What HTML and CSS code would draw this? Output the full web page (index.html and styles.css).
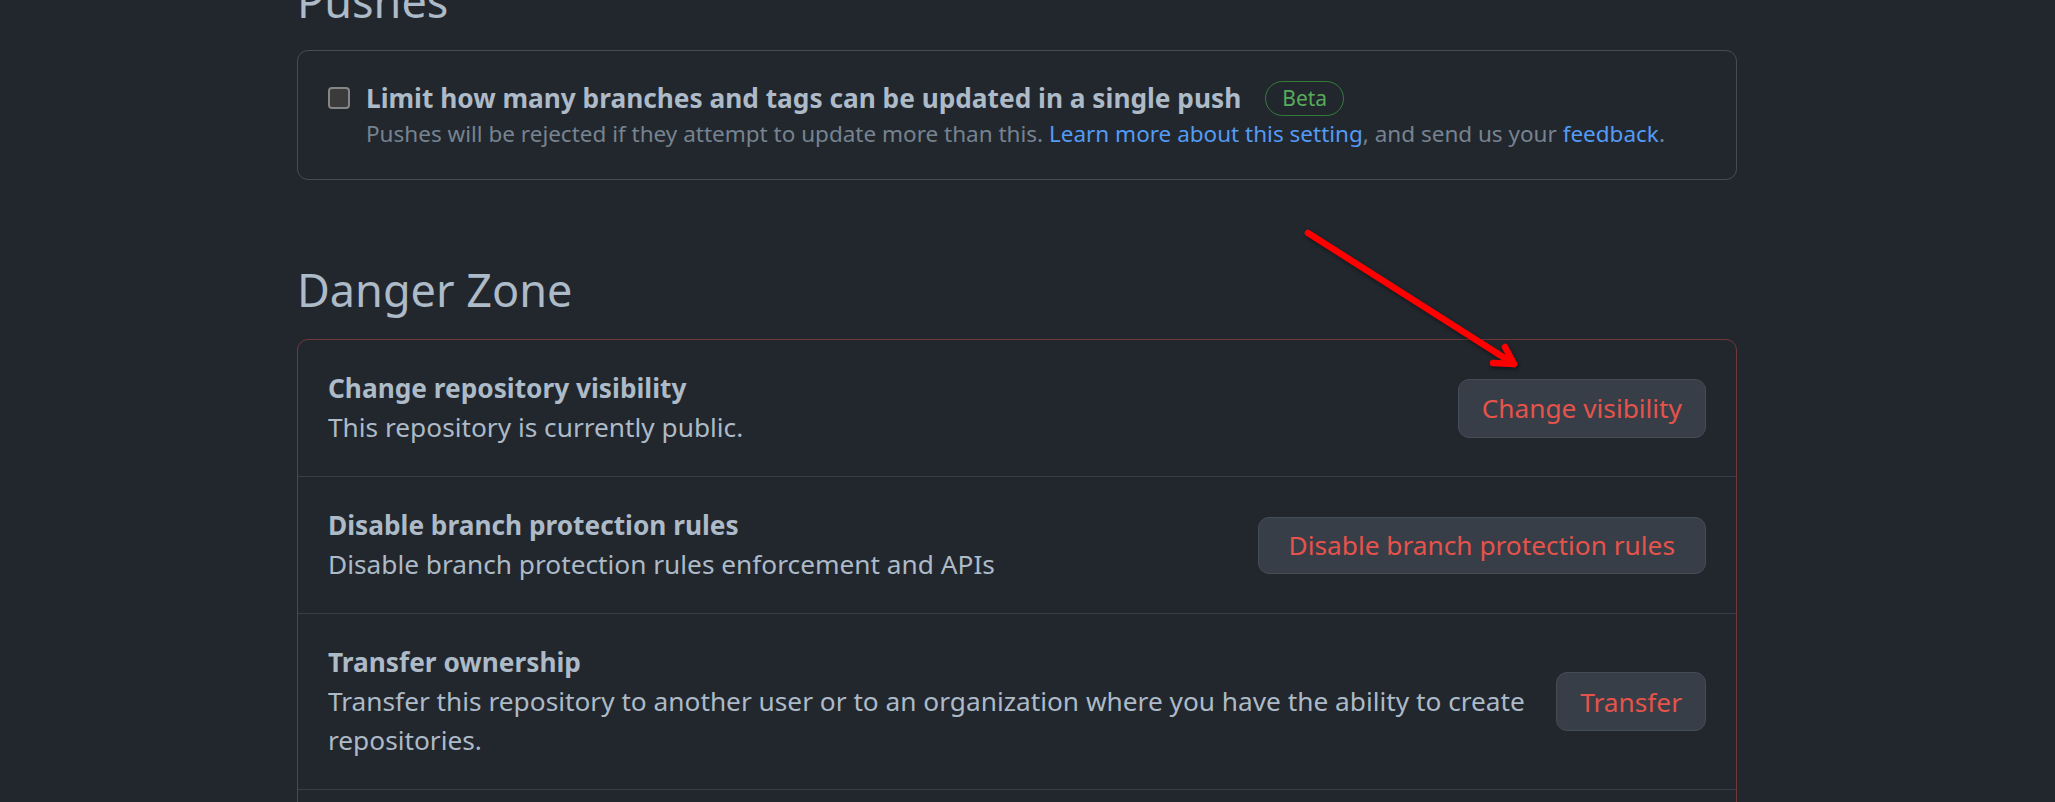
FILE: index.html
```html
<!DOCTYPE html>
<html lang="en">
<head>
<meta charset="utf-8">
<title>Settings</title>
<link rel="stylesheet" href="styles.css">
</head>
<body>
<main class="page">
  <h2 class="subhead subhead-first">Pushes</h2>
  <div class="box">
    <div class="push-row">
      <span class="checkbox"></span>
      <div class="push-body">
        <div class="push-title"><strong>Limit how many branches and tags can be updated in a single push</strong><span class="beta">Beta</span></div>
        <p class="note">Pushes will be rejected if they attempt to update more than this. <a href="#">Learn more about this setting</a>, and send us your <a href="#">feedback</a>.</p>
      </div>
    </div>
  </div>

  <h2 class="subhead subhead-danger">Danger Zone</h2>
  <div class="box box-danger">
    <div class="box-row">
      <div class="row-text">
        <strong class="row-title">Change repository visibility</strong>
        <p class="row-desc">This repository is currently public.</p>
      </div>
      <button class="btn-danger" type="button">Change visibility</button>
    </div>
    <div class="box-row">
      <div class="row-text">
        <strong class="row-title">Disable branch protection rules</strong>
        <p class="row-desc">Disable branch protection rules enforcement and APIs</p>
      </div>
      <button class="btn-danger btn-classic" type="button">Disable branch protection rules</button>
    </div>
    <div class="box-row">
      <div class="row-text">
        <strong class="row-title">Transfer ownership</strong>
        <p class="row-desc">Transfer this repository to another user or to an organization where you have the ability to create repositories.</p>
      </div>
      <button class="btn-danger" type="button">Transfer</button>
    </div>
    <div class="box-row">
      <div class="row-text">
        <strong class="row-title">Archive this repository</strong>
        <p class="row-desc">Mark this repository as archived and read-only.</p>
      </div>
      <button class="btn-danger" type="button">Archive this repository</button>
    </div>
  </div>
</main>

<svg class="annotation" width="2055" height="802" viewBox="0 0 2055 802" aria-hidden="true">
  <g fill="none" stroke="#ff0000" stroke-width="6.5" stroke-linecap="round" stroke-linejoin="round">
    <path d="M1308 233 L1514 364"/>
    <path d="M1505 347 L1514 364 L1493 363"/>
  </g>
</svg>
</body>
</html>
```

FILE: styles.css
```css
html, body {
  margin: 0;
  padding: 0;
  background: #22272e;
}

body {
  font-family: "Noto Sans", "Open Sans", sans-serif;
  color: #adbac7;
  overflow: hidden;
  position: relative;
}

.page {
  margin-left: 297px;
  width: 1440px;
}

.subhead {
  font-size: 45px;
  line-height: 55px;
  font-weight: 400;
  margin: 0 0 22px;
  color: #adbac7;
}

.subhead-first {
  margin-top: -27px;
}

.subhead-danger {
  margin-top: 82px;
}

.box {
  border: 1px solid #444c56;
  border-radius: 11px;
}

.box-danger {
  border-color: #703939;
}

.push-row {
  display: flex;
  align-items: flex-start;
  padding: 29px 30px 29.5px;
}

.checkbox {
  flex: none;
  width: 22px;
  height: 22px;
  box-sizing: border-box;
  margin-top: 7px;
  margin-right: 16px;
  border: 2px solid #858585;
  border-radius: 4px;
  background: #3b3b3b;
}

.push-body {
  flex: 1;
}

.push-title {
  display: flex;
  align-items: center;
  font-size: 26.25px;
  line-height: 37.5px;
  font-weight: 700;
}

.push-title strong {
  font-weight: 700;
}

.beta {
  margin-left: 24px;
  padding: 0 16px;
  border: 1px solid #347d39;
  border-radius: 2em;
  color: #57ab5a;
  font-size: 21px;
  line-height: 33px;
  font-weight: 400;
}

.note {
  margin: 0;
  font-size: 22.5px;
  line-height: 32px;
  color: #768390;
}

.note a {
  color: #539bf5;
  text-decoration: none;
}

.box-row {
  display: flex;
  align-items: center;
  gap: 16px;
  padding: 29px 30px;
}

.box-row + .box-row {
  border-top: 1px solid #373e47;
}

.row-text {
  flex: 1;
  font-size: 26.25px;
  line-height: 39px;
}

.row-title {
  display: block;
  font-weight: 700;
}

.row-desc {
  margin: 0;
}

.btn-danger {
  flex: none;
  height: 59px;
  padding: 0 23px;
  border: 1px solid #444c56;
  border-radius: 11px;
  background: #373e47;
  color: #e5534b;
  font-family: "Noto Sans", "Open Sans", sans-serif;
  font-size: 26.25px;
  font-weight: 400;
}

.btn-classic {
  height: 57px;
  padding: 0 30px;
}

.annotation {
  position: absolute;
  left: 0;
  top: 0;
  pointer-events: none;
  filter: drop-shadow(1px 2px 2px rgba(0, 0, 0, 0.45));
}
```
